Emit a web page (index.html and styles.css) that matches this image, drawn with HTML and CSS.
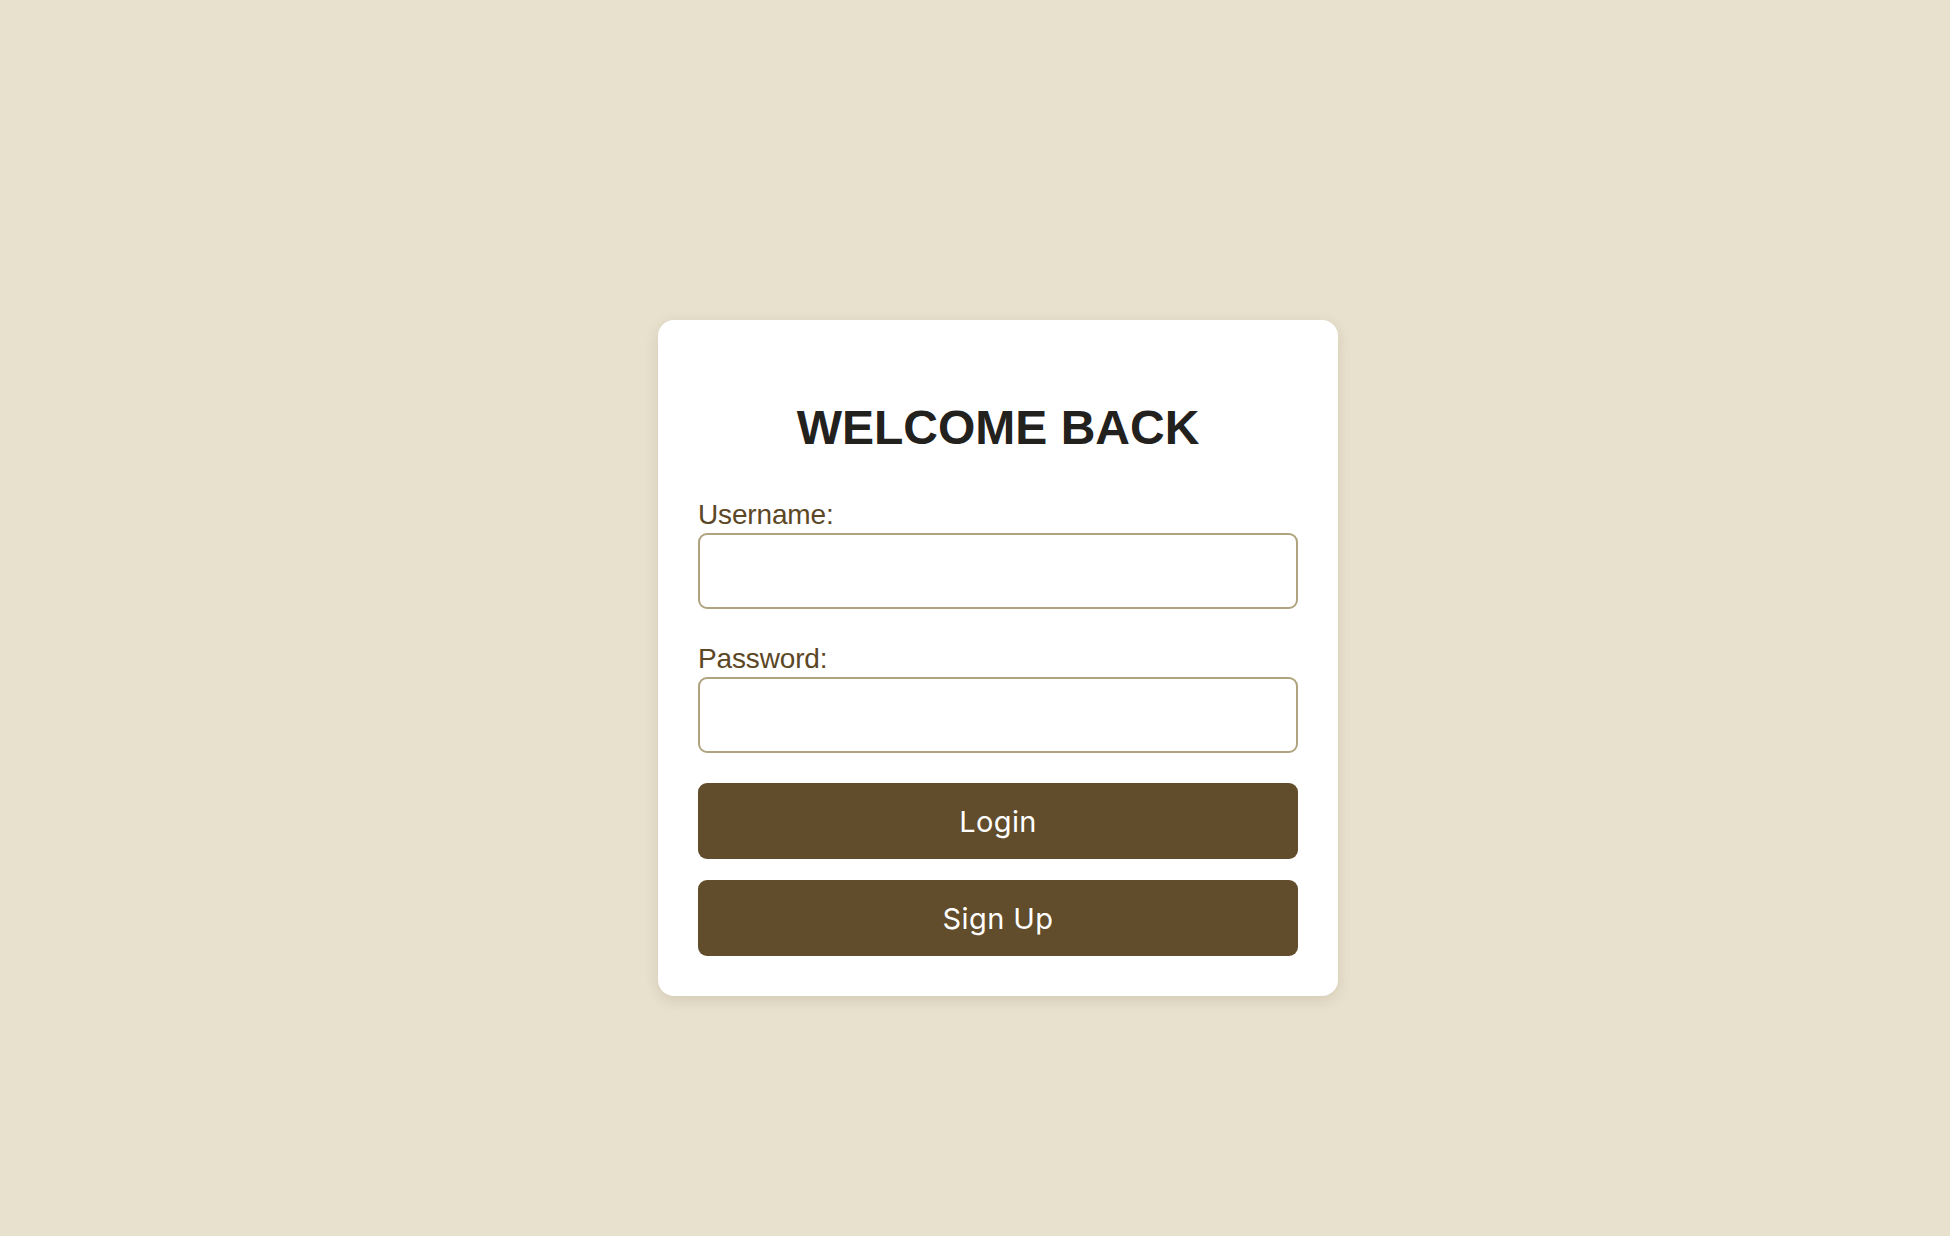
FILE: index.html
```html
<!DOCTYPE html>
<html lang="en">
<head>
<meta charset="utf-8">
<title>Welcome Back</title>
<link rel="stylesheet" href="styles.css">
</head>
<body>
<main class="page">
  <form class="card">
    <h1 class="title">WELCOME BACK</h1>
    <div class="field">
      <label class="label" for="username">Username:</label>
      <input class="input" id="username" type="text">
    </div>
    <div class="field">
      <label class="label" for="password">Password:</label>
      <input class="input" id="password" type="password">
    </div>
    <div class="actions">
      <button class="btn" type="button">Login</button>
      <button class="btn" type="button">Sign Up</button>
    </div>
  </form>
</main>
</body>
</html>
```

FILE: styles.css
```css
* { box-sizing: border-box; }

html, body {
  margin: 0;
  padding: 0;
  background: #e8e1ce;
}

.page {
  min-height: 100vh;
  display: flex;
  justify-content: center;
  align-items: center;
  padding: 80px 0 0 46px;
}

.card {
  width: 680px;
  background: #ffffff;
  border-radius: 16px;
  padding: 40px;
  box-shadow: 0 4px 14px rgba(90, 70, 30, 0.14);
  display: flex;
  flex-direction: column;
  font-family: "Liberation Sans", Arial, sans-serif;
}

.title {
  margin: 40px 0 44px;
  font-size: 48px;
  line-height: 55px;
  font-weight: 700;
  color: #23211d;
  text-align: center;
}

.field {
  display: flex;
  flex-direction: column;
  margin-bottom: 34px;
}

.field + .field { margin-bottom: 30px; }

.label {
  font-size: 28px;
  line-height: 32px;
  color: #5c4726;
  margin-bottom: 2px;
  letter-spacing: -0.15px;
}

.input {
  height: 76px;
  width: 100%;
  border: 2px solid #b0a37f;
  border-radius: 9px;
  background: #fff;
  margin: 0;
  padding: 0 16px;
  font-size: 24px;
  outline: none;
}

.actions {
  display: flex;
  flex-direction: column;
  gap: 21px;
}

.btn {
  height: 76px;
  width: 100%;
  border: none;
  border-radius: 9px;
  background: #614c2b;
  color: #ffffff;
  font-family: Inter, "Noto Sans", sans-serif;
  font-size: 29px;
  letter-spacing: 0.4px;
  margin: 0;
  padding: 0;
  cursor: pointer;
}
```
